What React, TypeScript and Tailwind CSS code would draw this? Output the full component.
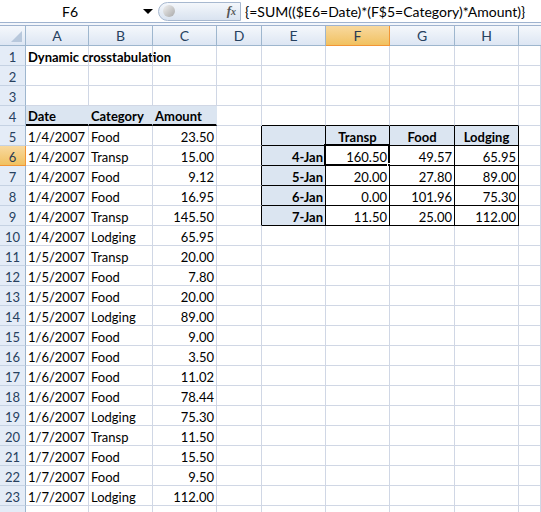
import React from "react";

const data: [string, string, string][] = [
  ["1/4/2007", "Food", "23.50"],
  ["1/4/2007", "Transp", "15.00"],
  ["1/4/2007", "Food", "9.12"],
  ["1/4/2007", "Food", "16.95"],
  ["1/4/2007", "Transp", "145.50"],
  ["1/4/2007", "Lodging", "65.95"],
  ["1/5/2007", "Transp", "20.00"],
  ["1/5/2007", "Food", "7.80"],
  ["1/5/2007", "Food", "20.00"],
  ["1/5/2007", "Lodging", "89.00"],
  ["1/6/2007", "Food", "9.00"],
  ["1/6/2007", "Food", "3.50"],
  ["1/6/2007", "Food", "11.02"],
  ["1/6/2007", "Food", "78.44"],
  ["1/6/2007", "Lodging", "75.30"],
  ["1/7/2007", "Transp", "11.50"],
  ["1/7/2007", "Food", "15.50"],
  ["1/7/2007", "Food", "9.50"],
  ["1/7/2007", "Lodging", "112.00"],
];

const cross: string[][] = [
  ["", "Transp", "Food", "Lodging"],
  ["4-Jan", "160.50", "49.57", "65.95"],
  ["5-Jan", "20.00", "27.80", "89.00"],
  ["6-Jan", "0.00", "101.96", "75.30"],
  ["7-Jan", "11.50", "25.00", "112.00"],
];

const letters = ["A", "B", "C", "D", "E", "F", "G", "H", ""];

type Cell = { text: string; bold?: boolean; right?: boolean; center?: boolean };

// content of a sheet cell, row r (1-based), col c (1 = A)
function cellAt(r: number, c: number): Cell {
  if (r === 1 && c === 1) return { text: "Dynamic crosstabulation", bold: true };
  if (r === 4 && c <= 3) return { text: ["Date", "Category", "Amount"][c - 1], bold: true };
  if (r >= 5 && r <= 23 && c <= 3) {
    const row = data[r - 5];
    return { text: row[c - 1], right: c === 3 };
  }
  if (r >= 5 && r <= 9 && c >= 5 && c <= 8) {
    const v = cross[r - 5][c - 5];
    if (r === 5) return { text: v, bold: true, center: true };
    if (c === 5) return { text: v, bold: true, right: true };
    return { text: v, right: true };
  }
  return { text: "" };
}

function borderClass(r: number, c: number) {
  const inCross = r >= 5 && r <= 9 && c >= 5 && c <= 8;
  if (inCross) {
    const fill = r === 5 || c === 5;
    return fill
      ? "border-r border-b border-black bg-[#dbe5f1]"
      : "border-r border-b border-black bg-white";
  }
  if (r === 4 && c <= 3) return "border-r border-[#dbe5f1] border-b-2 border-b-black bg-[#dbe5f1]";
  if (r === 4 && c >= 5 && c <= 8) return "border-r border-[#d0d7e5] border-b border-b-black";
  if (c === 4 && r >= 5 && r <= 9) return "border-r border-r-black border-b border-[#d0d7e5]";
  return "border-r border-b border-[#d0d7e5]";
}

function SheetCell({ r, c }: { r: number; c: number }) {
  const cell = cellAt(r, c);
  const selected = r === 6 && c === 6;
  return (
    <div className={`relative h-[20px] flex items-end ${borderClass(r, c)}`}>
      <span
        className={`whitespace-nowrap leading-[15px] px-[2px] w-full ${cell.right ? "text-right" : cell.center ? "text-center" : "text-left"} ${cell.bold ? "font-bold" : ""} ${r === 1 && c === 1 ? "overflow-visible" : "overflow-hidden"}`}
      >
        {cell.text}
      </span>
      {selected && (
        <>
          <div className="absolute -left-[2px] -top-[2px] -right-[1px] -bottom-[1px] border-2 border-black pointer-events-none" />
          <div className="absolute -right-[4px] -bottom-[4px] w-[6px] h-[6px] bg-black border border-white" />
        </>
      )}
    </div>
  );
}

function ColHeader({ label, i }: { label: string; i: number }) {
  const sel = label === "F";
  return (
    <div
      className={`h-[20px] flex items-center justify-center text-[14px] leading-[16px] border-b ${
        sel
          ? "bg-gradient-to-b from-[#f8d99e] to-[#f1c15f] border-[#f29536] border-r text-[#2a3b52]"
          : i === 8
          ? "bg-gradient-to-b from-[#f5f8fc] to-[#dde6f3] border-[#9eb6ce] text-[#27415f]"
          : "bg-gradient-to-b from-[#f5f8fc] to-[#dde6f3] border-[#9eb6ce] border-r text-[#27415f]"
      }`}
    >
      {label}
    </div>
  );
}

function RowHeader({ n }: { n: number }) {
  const sel = n === 6;
  return (
    <div
      className={`h-[20px] flex items-end justify-center text-[13px] leading-[15px] border-r border-b ${
        sel
          ? "bg-gradient-to-b from-[#f8d99e] to-[#f1c15f] border-r-[#f29536] border-b-[#f29536] text-[#2a3b52]"
          : "bg-[#e4ecf7] border-r-[#9eb6ce] border-b-[#c5d2e3] text-[#27415f]"
      }`}
    >
      {n < 24 ? n : ""}
    </div>
  );
}

export default function App() {
  const rows = Array.from({ length: 24 }, (_, i) => i + 1);
  return (
    <div
      className="w-[541px] h-[512px] overflow-hidden bg-white text-black text-[13px]"
      style={{ fontFamily: "Lato, 'Liberation Sans', sans-serif" }}
    >
      {/* formula bar */}
      <div className="h-[23px] flex items-center border-b border-[#9fb3cf]">
        <div className="w-[158px] h-full flex items-center relative">
          <span className="flex-1 text-center pr-[18px] text-[14px]">F6</span>
          <span className="absolute left-[143px] top-[9px] w-0 h-0 border-l-[5px] border-r-[5px] border-t-[5px] border-l-transparent border-r-transparent border-t-black" />
        </div>
        <div className="w-[83px] h-[19px] flex items-center justify-between rounded-l-full border border-[#a7b8cf] bg-gradient-to-b from-[#f4f7fb] to-[#d9e3f0] pl-[4px] pr-[4px]">
          <span className="w-[12px] h-[12px] rounded-full bg-gradient-to-br from-[#f2f2f2] to-[#a9a9a9]" />
          <span className="italic font-bold text-[13px] text-[#555]" style={{ fontFamily: "'Liberation Serif', serif" }}>
            f<span className="text-[10px]">x</span>
          </span>
        </div>
        <div className="flex-1 h-full flex items-center pl-[4px] text-[14px] whitespace-nowrap">
          {"{=SUM(($E6=Date)*(F$5=Category)*Amount)}"}
        </div>
      </div>
      <div className="h-[3px] bg-[#f3f6fb] border-b border-[#9fb3cf]" />

      {/* sheet grid */}
      <div className="grid grid-cols-[26px_63px_64px_64px_45px_64px_64px_65px_64px_1fr]">
        <div className="h-[20px] bg-gradient-to-b from-[#f5f8fc] to-[#dde6f3] border-r border-b border-[#9eb6ce] flex items-end justify-end p-[3px]">
          <div className="w-0 h-0 border-l-[11px] border-b-[11px] border-l-transparent border-b-[#b8c8dc]" />
        </div>
        {letters.map((l, i) => (
          <ColHeader key={i} label={l} i={i} />
        ))}
        {rows.map((r) => (
          <React.Fragment key={r}>
            <RowHeader n={r} />
            {[1, 2, 3, 4, 5, 6, 7, 8, 9].map((c) => (
              <SheetCell key={c} r={r} c={c} />
            ))}
          </React.Fragment>
        ))}
      </div>
    </div>
  );
}
